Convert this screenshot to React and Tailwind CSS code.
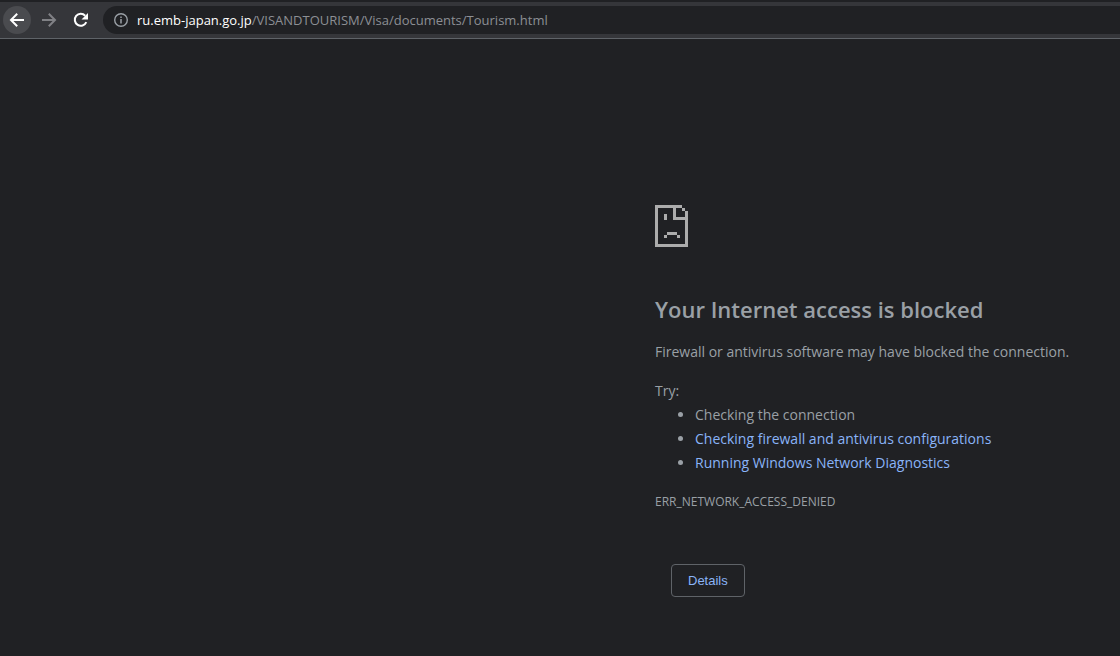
import React from 'react';

const suggestions = [
  { text: 'Checking the connection' },
  { text: 'Checking firewall and antivirus configurations', href: '#firewall' },
  { text: 'Running Windows Network Diagnostics', href: '#diagnostics' },
];

const Toolbar = () => (
  <header className="flex h-[39px] items-center border-t-2 border-b border-t-[#202124] border-b-[#5f6368] bg-[#35363a] pl-[3px]">
    <nav className="flex gap-1">
      <button aria-label="Back" className="flex size-7 items-center justify-center rounded-full bg-[#4a4b4f] text-white">
        <svg className="size-4" viewBox="0 0 16 16" fill="none" stroke="currentColor" strokeWidth="2">
          <path d="M15 8H2.5M8.2 1.8L2 8l6.2 6.2" />
        </svg>
      </button>
      <button aria-label="Forward" className="flex size-7 items-center justify-center rounded-full text-[#808185]">
        <svg className="size-4" viewBox="0 0 16 16" fill="none" stroke="currentColor" strokeWidth="2">
          <path d="M1 8h12.5M7.8 1.8L14 8l-6.2 6.2" />
        </svg>
      </button>
      <button aria-label="Reload" className="flex size-7 items-center justify-center rounded-full text-white">
        <svg className="size-4" viewBox="0 0 16 16">
          <path d="M13.3 10.2A6 6 0 1 1 12.2 3.7" fill="none" stroke="currentColor" strokeWidth="2" />
          <path d="M15 1v6.5H8.5z" fill="currentColor" />
        </svg>
      </button>
    </nav>

    {/* Address bar */}
    <div className="ml-2 flex h-7 min-w-0 flex-1 items-center gap-2 rounded-l-full bg-[#202124] pl-[10px]">
      <svg className="size-4 shrink-0 text-[#9aa0a6]" viewBox="0 0 16 16" fill="none" stroke="currentColor">
        <circle cx="8" cy="8" r="6.3" strokeWidth="1.4" />
        <path d="M8 7v4.5M8 4.5v1.5" strokeWidth="1.5" />
      </svg>
      <p className="truncate text-[13px] leading-5 text-[#8c8f94]">
        <span className="text-white">ru.emb-japan.go.jp</span>/VISANDTOURISM/Visa/documents/Tourism.html
      </p>
    </div>
  </header>
);

const SadPageIcon = () => (
  <svg className="h-[42px] w-[33px]" viewBox="0 0 11 14" fill="#acacac" shapeRendering="crispEdges">
    <path d="M0 0h9v1H7v3h4v10H0zM1 1v12h9V5H6V1z" />
    <path d="M9 1h1v1H9zM10 2h1v2h-1zM3 3h1v2H3zM4 9h3.33v1H4zM3 10h1v1H3zM7.33 10h1v1h-1z" />
  </svg>
);

export default function App() {
  return (
    <div className="min-h-screen bg-[#202124] font-['Open_Sans','Noto_Sans',sans-serif] text-[#9aa0a6]">
      <Toolbar />
      <main className="grid grid-cols-[655fr_465fr] pt-[166px]">
        <div className="col-start-2 text-sm leading-6">
          <SadPageIcon />
          <h1 className="mt-12 pb-0.5 text-[22px] leading-7 font-semibold">Your Internet access is blocked</h1>
          <p className="mt-[15px]">Firewall or antivirus software may have blocked the connection.</p>
          <p className="mt-[15px]">Try:</p>
          <ul className="list-disc pl-10">
            {suggestions.map(({ text, href }) => (
              <li key={text}>
                {href ? <a href={href} className="text-[#8ab4f8]">{text}</a> : text}
              </li>
            ))}
          </ul>
          <p className="mt-[15px] text-xs leading-6">ERR_NETWORK_ACCESS_DENIED</p>
          <button className="mt-[50px] ml-4 h-[33px] rounded-sm border border-[#5f6368] px-4 font-['Liberation_Sans',sans-serif] text-[13px] leading-4 text-[#8ab4f8]">
            Details
          </button>
        </div>
      </main>
    </div>
  );
}
